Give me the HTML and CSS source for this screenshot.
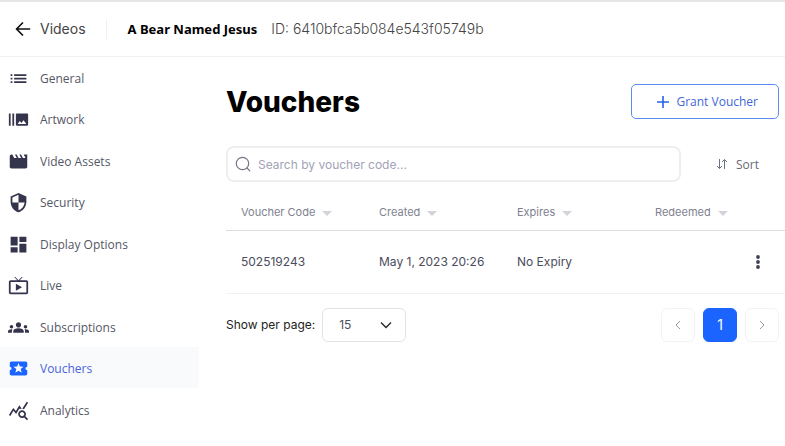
FILE: index.html
```html
<!DOCTYPE html>
<html lang="en">
<head>
    <meta charset="UTF-8">
    <meta name="viewport" content="width=device-width, initial-scale=1.0">
    <title>Vouchers</title>
    <link rel="stylesheet" href="styles.css">
</head>
<body>

    <header class="topbar">
        <a class="back" href="#">
            <svg width="16" height="16" viewBox="0 0 16 16" fill="none" stroke="#111" stroke-width="1.7" stroke-linecap="round" stroke-linejoin="round"><path d="M14.500 8H1.500M7.500 2L1.500 8l6 6"/></svg>
            Videos
        </a>
        <div class="video-info">
            <span class="video-title">A Bear Named Jesus</span>
            <span class="video-id">ID: 6410bfca5b084e543f05749b</span>
        </div>
    </header>

    <div class="layout">
        <nav class="sidebar">
            <ul>
                <li><a href="#"><svg class="icon" viewBox="0 0 24 24"><path d="M3 13h2v-2H3v2zm0 4h2v-2H3v2zm0-8h2V7H3v2zm4 4h14v-2H7v2zm0 4h14v-2H7v2zM7 7v2h14V7H7z"/></svg>General</a></li>
                <li><a href="#"><svg class="icon" viewBox="0 0 24 24"><path d="M1 5h2v14H1zm4 0h2v14H5zm17 0H10c-.55 0-1 .45-1 1v12c0 .55.45 1 1 1h12c.55 0 1-.45 1-1V6c0-.55-.45-1-1-1zM11 17l2.500-3.150L15.290 16l2.500-3.220L21 17H11z"/></svg>Artwork</a></li>
                <li><a href="#"><svg class="icon" viewBox="0 0 24 24"><path d="M18 4l2 4h-3l-2-4h-2l2 4h-3l-2-4H8l2 4H7L5 4H4c-1.100 0-1.990.9-1.990 2L2 18c0 1.100.9 2 2 2h16c1.100 0 2-.9 2-2V4h-4z"/></svg>Video Assets</a></li>
                <li><a href="#"><svg class="icon" viewBox="0 0 24 24"><path d="M12 1L3 5v6c0 5.550 3.840 10.740 9 12 5.160-1.260 9-6.450 9-12V5l-9-4zm0 10.990h7c-.53 4.120-3.280 7.790-7 8.940V12H5V6.300l7-3.110v8.800z"/></svg>Security</a></li>
                <li><a href="#"><svg class="icon" viewBox="0 0 24 24"><path d="M3 13h8V3H3v10zm0 8h8v-6H3v6zm10 0h8V11h-8v10zm0-18v6h8V3h-8z"/></svg>Display Options</a></li>
                <li><a href="#"><svg class="icon" viewBox="0 0 24 24"><path d="M21 6h-7.590l3.290-3.290L16 2l-4 4-4-4-.7.710L10.590 6H3c-1.100 0-2 .89-2 2v12c0 1.100.9 2 2 2h18c1.100 0 2-.9 2-2V8c0-1.110-.9-2-2-2zm0 14H3V8h18v12zM9 10v8l7-4z"/></svg>Live</a></li>
                <li><a href="#"><svg class="icon" viewBox="0 0 24 24"><path d="M12 12.750c1.630 0 3.070.39 4.240.9 1.080.48 1.760 1.560 1.760 2.730V18H6v-1.610c0-1.180.68-2.260 1.760-2.730 1.170-.52 2.610-.91 4.240-.91zM4 13c1.100 0 2-.9 2-2s-.9-2-2-2-2 .9-2 2 .9 2 2 2zm1.130 1.100c-.37-.06-.74-.1-1.130-.1-.99 0-1.930.21-2.780.58C.48 14.900 0 15.620 0 16.430V18h4.500v-1.610c0-.83.23-1.610.63-2.290zM20 13c1.100 0 2-.9 2-2s-.9-2-2-2-2 .9-2 2 .9 2 2 2zm4 3.430c0-.81-.48-1.530-1.220-1.850-.85-.37-1.790-.58-2.780-.58-.39 0-.76.04-1.130.1.400.68.63 1.460.63 2.290V18H24v-1.570zM12 6c1.660 0 3 1.340 3 3s-1.340 3-3 3-3-1.340-3-3 1.340-3 3-3z"/></svg>Subscriptions</a></li>
                <li><a class="active" href="#"><svg class="icon" viewBox="0 0 24 24"><path d="M20 12c0-1.100.9-2 2-2V6c0-1.100-.9-2-2-2H4c-1.100 0-1.990.9-1.990 2v4c1.100 0 1.990.9 1.990 2s-.89 2-2 2v4c0 1.100.9 2 2 2h16c1.100 0 2-.9 2-2v-4c-1.100 0-2-.9-2-2zm-4.420 4.800L12 14.500l-3.580 2.300 1.080-4.120-3.290-2.690 4.240-.25L12 5.800l1.540 3.950 4.240.25-3.290 2.690 1.090 4.110z"/></svg>Vouchers</a></li>
                <li><a href="#"><svg class="icon" viewBox="0 0 24 24"><path d="M19.880 18.470c.44-.7.700-1.510.7-2.390 0-2.490-2.010-4.500-4.500-4.500s-4.500 2.010-4.500 4.500 2.010 4.500 4.490 4.500c.88 0 1.700-.26 2.390-.7L21.580 23 23 21.580l-3.120-3.110zm-3.800.11c-1.380 0-2.500-1.120-2.500-2.500s1.120-2.500 2.500-2.500 2.500 1.120 2.500 2.500-1.120 2.500-2.500 2.500zM15.720 10.080c-.74.02-1.450.18-2.100.45l-.55-.83-3.800 6.180-3.010-3.520-3.630 5.810L1 17l5-8 3 3.500L13 6l2.720 4.080zm2.590.5c-.64-.28-1.330-.45-2.050-.49L21.380 2 23 3.180l-4.690 7.400z"/></svg>Analytics</a></li>
            </ul>
        </nav>

        <main class="content">
            <div class="page-head">
                <h1>Vouchers</h1>
                <button class="grant" type="button">
                    <svg width="14" height="14" viewBox="0 0 14 14" fill="none" stroke="#2563eb" stroke-width="1.6"><path d="M7 1v12M1 7h12"/></svg>
                    Grant Voucher
                </button>
            </div>

            <div class="toolbar">
                <label class="search">
                    <svg width="16" height="16" viewBox="0 0 16 16" fill="none" stroke="#747684" stroke-width="1.2" stroke-linecap="round"><circle cx="7.500" cy="7.500" r="6.200"/><path d="M12 12l2.800 2.800"/></svg>
                    <input type="text" placeholder="Search by voucher code..." aria-label="Search by voucher code">
                </label>
                <button class="sort" type="button">
                    <svg width="12" height="12" viewBox="0 0 12 12" fill="none" stroke="#6b7280" stroke-width="1"><path d="M3.500 1v9.500M1 8l2.500 2.500L6 8M8.500 11V1.500M6 4l2.500-2.500L11 4"/></svg>
                    Sort
                </button>
            </div>

            <table class="vouchers">
                <colgroup>
                    <col class="col-data">
                    <col class="col-data">
                    <col class="col-data">
                    <col>
                    <col class="col-menu">
                </colgroup>
                <thead>
                    <tr>
                        <th>Voucher Code <span class="caret"></span></th>
                        <th>Created <span class="caret"></span></th>
                        <th>Expires <span class="caret"></span></th>
                        <th colspan="2">Redeemed <span class="caret"></span></th>
                    </tr>
                </thead>
                <tbody>
                    <tr>
                        <td>502519243</td>
                        <td>May 1, 2023 20:26</td>
                        <td>No Expiry</td>
                        <td></td>
                        <td class="menu-cell">
                            <button class="row-menu" type="button" aria-label="Row actions">
                                <svg width="6" height="16" viewBox="0 0 6 16" fill="#3f4254"><circle cx="3" cy="3" r="1.900"/><circle cx="3" cy="8" r="1.900"/><circle cx="3" cy="13" r="1.900"/></svg>
                            </button>
                        </td>
                    </tr>
                </tbody>
            </table>

            <div class="table-foot">
                <label for="per-page">Show per page:</label>
                <div class="select-wrap">
                    <select id="per-page">
                        <option>15</option>
                        <option>30</option>
                        <option>50</option>
                    </select>
                    <svg class="chevron" width="12" height="8" viewBox="0 0 12 8" fill="none" stroke="#222" stroke-width="1.300"><path d="M1 1.500l5 5 5-5"/></svg>
                </div>
                <div class="pager">
                    <button type="button" aria-label="Previous page"><svg width="6" height="10" viewBox="0 0 6 10" fill="none" stroke="#9a9ca8" stroke-width="1"><path d="M5 1L1 5l4 4"/></svg></button>
                    <button class="current" type="button">1</button>
                    <button type="button" aria-label="Next page"><svg width="6" height="10" viewBox="0 0 6 10" fill="none" stroke="#9a9ca8" stroke-width="1"><path d="M1 1l4 4-4 4"/></svg></button>
                </div>
            </div>
        </main>
    </div>

</body>
</html>
```
FILE: styles.css
```css
* {
    box-sizing: border-box;
}
body {
    margin: 0;
    font-family: Inter, sans-serif;
    font-size: 12px;
    color: #4a4c5c;
    background: white;
}
button {
    font-family: inherit;
    background: white;
    padding: 0;
    border: none;
    cursor: pointer;
}
a {
    color: inherit;
    text-decoration: none;
}

/* top bar */
.topbar {
    display: flex;
    align-items: center;
    height: 57px;
    padding-left: 15px;
    border-top: 2px solid #e6e6e6;
    border-bottom: 1px solid #f1f1f3;
}
.back {
    display: flex;
    align-items: center;
    gap: 9px;
    padding-right: 20px;
    font-size: 14px;
    line-height: 20px;
    color: #444;
    border-right: 1px solid #f1f1f3;
}
.video-info {
    display: flex;
    align-items: baseline;
    gap: 14px;
    padding-left: 21px;
    font-size: 14px;
    line-height: 20px;
    color: #444;
}
.video-title {
    font-family: "Noto Sans", sans-serif;
    font-size: 13px;
    font-weight: 700;
    color: black;
}
.video-id {
    font-weight: 300;
}

.layout {
    display: flex;
}

/* sidebar */
.sidebar {
    flex: 0 0 199px;
    font-family: "Open Sans", sans-serif;
}
.sidebar ul {
    list-style: none;
    margin: 0;
    padding: 0;
}
.sidebar li:nth-child(even) {
    padding-bottom: 1px;
}
.sidebar a {
    display: flex;
    align-items: center;
    gap: 11px;
    height: 41px;
    padding: 2px 0 0 8px;
    color: #555765;
}
.sidebar a.active {
    background: #f8fafc;
    color: #4a64e0;
}
.icon {
    width: 21px;
    height: 21px;
    fill: #34354d;
}
.active .icon {
    fill: #1b64ff;
}

/* content */
.content {
    flex: 1;
    min-width: 0;
    padding: 27px 0 0 27px;
}
.page-head {
    display: flex;
    align-items: center;
    justify-content: space-between;
    padding-right: 6px;
}
h1 {
    margin: 0;
    font-size: 28px;
    line-height: 34px;
    font-weight: 800;
    color: black;
}
.grant {
    display: flex;
    align-items: center;
    gap: 6px;
    height: 35px;
    padding: 0 20px 0 24px;
    border: 1px solid #5b8def;
    border-radius: 5px;
    font-family: "Open Sans", sans-serif;
    font-size: 12px;
    color: #3f68d8;
}
.toolbar {
    display: flex;
    align-items: center;
    padding: 27px 26px 0 0;
}
.search {
    flex: 1;
    display: flex;
    align-items: center;
    gap: 7px;
    height: 36px;
    padding: 0 7px;
    border: 2px solid #eeeef1;
    border-radius: 8px;
}
.search input {
    flex: 1;
    min-width: 0;
    padding: 0;
    border: none;
    outline: none;
    font-family: inherit;
    font-size: 12px;
    color: #4a4c5c;
}
.search input::placeholder {
    color: #a1a3b6;
}
.sort {
    display: flex;
    align-items: center;
    gap: 8px;
    margin-left: 35px;
    font-family: "Open Sans", sans-serif;
    font-size: 12px;
    color: #666a75;
}

/* vouchers table */
.vouchers {
    width: 100%;
    margin-top: 12px;
    table-layout: fixed;
    border-collapse: collapse;
}
.col-data {
    width: 138px;
}
.col-menu {
    width: 54px;
}
.vouchers th,
.vouchers td {
    padding: 0 0 0 15px;
    text-align: left;
    white-space: nowrap;
}
.vouchers th {
    height: 36px;
    font-size: 11px;
    font-weight: 400;
    color: #7e8190;
    border-bottom: 1px solid #dcdce0;
}
.vouchers td {
    height: 63px;
    font-size: 12px;
    border-bottom: 1px solid #f1f1f3;
}
.caret {
    display: inline-block;
    margin-left: 4px;
    border: 5px solid transparent;
    border-top-color: #d3d4d9;
    border-bottom: none;
}
.vouchers .menu-cell {
    padding: 0 24px 0 0;
    text-align: right;
}
.row-menu {
    vertical-align: middle;
}
.row-menu svg {
    display: block;
}

/* paging */
.table-foot {
    display: flex;
    align-items: center;
    padding: 14px 6px 0 0;
    color: #222;
}
.select-wrap {
    position: relative;
    margin-left: 7px;
}
.select-wrap select {
    appearance: none;
    width: 84px;
    height: 34px;
    padding: 0 16px;
    border: 1px solid #e2e2e8;
    border-radius: 6px;
    background: white;
    font-family: inherit;
    font-size: 12px;
    color: #4a4c5c;
}
.chevron {
    position: absolute;
    right: 14px;
    top: 13px;
    pointer-events: none;
}
.pager {
    display: flex;
    gap: 8px;
    margin-left: auto;
}
.pager button {
    display: flex;
    align-items: center;
    justify-content: center;
    width: 34px;
    height: 34px;
    border: 1px solid #f3f3f6;
    border-radius: 6px;
}
.pager .current {
    background: #1b64ff;
    border-color: #1b64ff;
    font-size: 14px;
    color: white;
}
```
